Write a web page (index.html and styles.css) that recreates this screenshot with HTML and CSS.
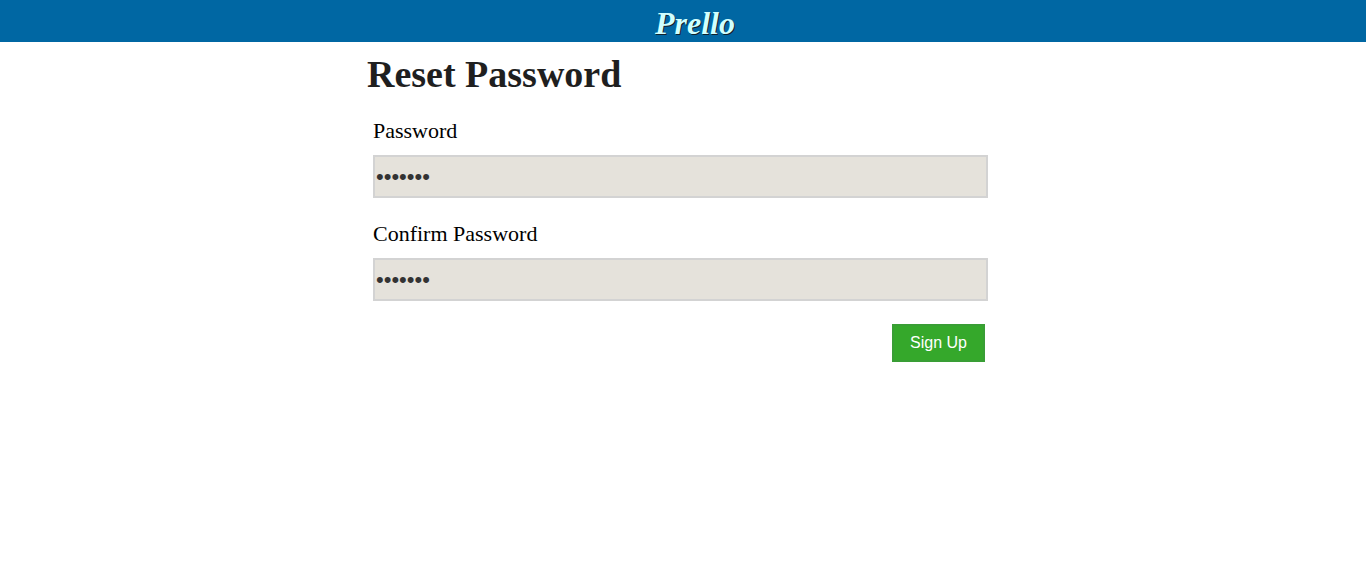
FILE: index.html
```
<!DOCTYPE html>
<html lang="en">
<head>
<meta charset="utf-8">
<meta name="viewport" content="width=device-width, initial-scale=1">
<title>Prello</title>
<link rel="stylesheet" href="styles.css">
</head>
<body>
<header class="topbar"><a class="logo" href="#">Prello</a></header>
<main class="page">
<h1 class="title">Reset Password</h1>
<form class="form">
<label class="label" for="password">Password</label>
<input class="input" id="password" type="password" value="1234567">
<label class="label" for="confirm">Confirm Password</label>
<input class="input" id="confirm" type="password" value="1234567">
<button class="submit" type="submit">Sign Up</button>
</form>
</main>
</body>
</html>
```

FILE: styles.css
```
* { box-sizing: border-box; }
body {
  margin: 0;
  background: #fff;
  color: #000;
  font-family: "Liberation Serif", "Times New Roman", serif;
}
.topbar {
  display: flex;
  justify-content: center;
  align-items: center;
  height: 42px;
  padding-top: 4px;
  padding-left: 24px;
  background: #0067a3;
}
.logo {
  color: #d0ffff;
  font-size: 32px;
  font-style: italic;
  font-weight: bold;
  line-height: 36px;
  text-decoration: none;
  text-shadow: 1px 1px 0 #10202c;
}
.page {
  max-width: 632px;
  margin: 0 auto;
  padding-top: 8px;
}
.title {
  margin: 0;
  color: #1f1f1f;
  font-size: 38px;
  line-height: 48px;
}
.form {
  display: flex;
  flex-direction: column;
  padding: 20px 11px 0 6px;
}
.label {
  margin-bottom: 11px;
  font-size: 22px;
  line-height: 26px;
}
.input {
  width: 100%;
  height: 43px;
  margin-bottom: 23px;
  padding: 0 1px;
  border: 2px solid #d3d3d3;
  border-radius: 0;
  background: #e5e2db;
  color: #333;
  font-family: "Liberation Sans", Arial, sans-serif;
  font-size: 22px;
}
.submit {
  align-self: flex-end;
  height: 38px;
  margin-right: 3px;
  padding: 0 16px;
  border: 2px solid #399e35;
  background: #35a82b;
  color: #fff;
  font-family: "Liberation Sans", Arial, sans-serif;
  font-size: 16px;
}
```
